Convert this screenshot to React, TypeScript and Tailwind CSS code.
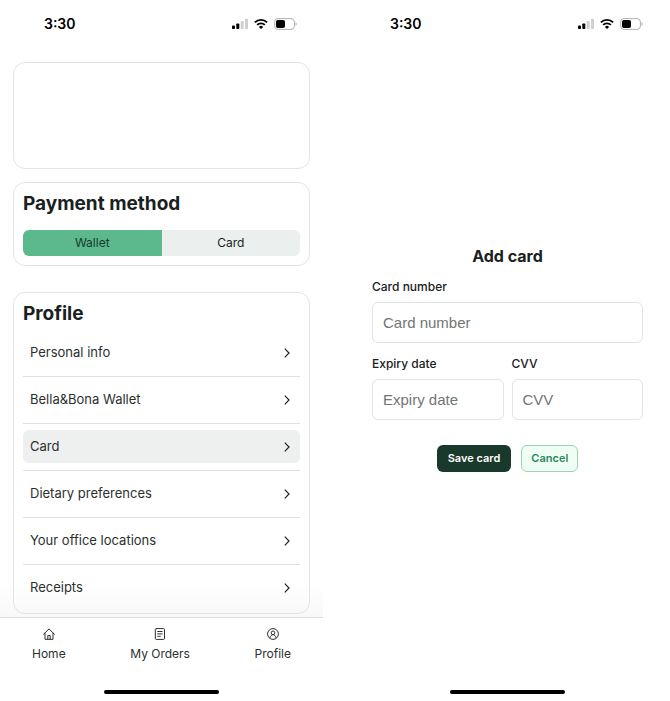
import React from 'react'
import clsx from 'clsx'

const menuItems = [
  'Personal info',
  'Bella&Bona Wallet',
  'Card',
  'Dietary preferences',
  'Your office locations',
  'Receipts',
]

function StatusBar() {
  return (
    <div className="flex h-12 shrink-0 items-center justify-between pl-11 pr-[26px] text-black">
      <span className="text-sm font-semibold">3:30</span>
      <div className="flex items-center gap-[6px]">
        <svg width="16" height="12" viewBox="0 0 16 12" fill="currentColor" aria-hidden="true">
          <rect x="0" y="7.5" width="3" height="3.5" rx="0.8" />
          <rect x="4.3" y="5.5" width="3" height="5.5" rx="0.8" />
          <rect x="8.7" y="3" width="3" height="8" rx="0.8" fill="#cfcfcf" />
          <rect x="13" y="0.7" width="3" height="10.3" rx="0.8" fill="#cfcfcf" />
        </svg>
        <svg width="14" height="12" viewBox="0 0 14 12" fill="none" stroke="currentColor" strokeWidth="1.9" aria-hidden="true">
          <path d="M0.9 4.4a8.7 8.7 0 0 1 12.2 0" />
          <path d="M3.2 6.9a5.4 5.4 0 0 1 7.6 0" />
          <path d="M7 11.1 4.9 8.9a3 3 0 0 1 4.2 0z" fill="currentColor" stroke="none" />
        </svg>
        <svg width="23" height="12" viewBox="0 0 23 12" aria-hidden="true">
          <rect x="0.6" y="0.6" width="19.8" height="10.8" rx="3.4" fill="none" stroke="#b0b0b0" />
          <rect x="2" y="2" width="9" height="8" rx="2" fill="#000" />
          <path d="M21.5 4.2c.8.3 1.2 1 1.2 1.8s-.4 1.5-1.2 1.8z" fill="#b0b0b0" />
        </svg>
      </div>
    </div>
  )
}

function HomeIndicator() {
  return <div className="mx-auto h-1 w-[115px] shrink-0 rounded-full bg-black" />
}

function ChevronIcon() {
  return (
    <svg width="6" height="10" viewBox="0 0 6 10" fill="none" stroke="#1b2421" strokeWidth="1.2" aria-hidden="true">
      <path d="M0.8 0.7 5 5 0.8 9.3" />
    </svg>
  )
}

function HomeIcon() {
  return (
    <svg width="12" height="12" viewBox="0 0 12 12" fill="none" stroke="currentColor" strokeLinejoin="round" strokeLinecap="round" aria-hidden="true">
      <path d="M0.5 6.3 6 0.9l5.5 5.4M2 5.2v6.1h8V5.2M4.8 11.2V7.6h2.4v3.6" />
    </svg>
  )
}

function OrdersIcon() {
  return (
    <svg width="12" height="12" viewBox="0 0 12 12" fill="none" stroke="currentColor" strokeLinecap="round" aria-hidden="true">
      <rect x="1.3" y="0.6" width="9.2" height="10.8" rx="1" />
      <path d="M3.7 3.5h4.5M3.7 5.9h4.5M3.7 8.3h2.6" />
    </svg>
  )
}

function ProfileIcon() {
  return (
    <svg width="12" height="12" viewBox="0 0 12 12" fill="none" stroke="currentColor" aria-hidden="true">
      <circle cx="6" cy="6" r="5.4" />
      <circle cx="6" cy="4.8" r="1.8" />
      <path d="M3 9.9c.3-2 1.5-3.2 3-3.2s2.7 1.2 3 3.2" />
    </svg>
  )
}

function ProfileScreen() {
  return (
    <div className="flex flex-col pb-[7px]">
      <StatusBar />

      <main className="bg-[linear-gradient(to_top,#f8f8f8,#fff_32px)] px-[13px] pb-[3px] pt-[14px]">
        <section className="h-[107px] rounded-xl border border-[#e2e4e3]" />

        {/* Payment method */}
        <section className="mt-[13px] rounded-xl border border-[#e2e4e3] px-[9px] pb-[9px] pt-[9px]">
          <h2 className="text-[19px] font-bold leading-6">Payment method</h2>
          <div className="mt-[14px] grid grid-cols-2 overflow-hidden rounded-md text-xs">
            <button type="button" className="h-[26px] bg-[#5cb88d] text-[#173a2c]">Wallet</button>
            <button type="button" className="h-[26px] bg-[#ebefee]">Card</button>
          </div>
        </section>

        {/* Profile menu */}
        <section className="mt-[26px] rounded-xl border border-[#e2e4e3] px-[9px] pb-[9px] pt-[9px]">
          <h2 className="text-[19px] font-bold leading-6">Profile</h2>
          <ul className="mt-[4px] divide-y divide-[#dfe1e0]">
            {menuItems.map((item) => (
              <li key={item} className="pb-[7px] pt-[6px] last:pb-0">
                <button
                  type="button"
                  className={clsx(
                    'flex h-[33px] w-full items-center justify-between rounded-md pl-[7px] pr-[10px] text-left text-[13px] text-[#2a302e]',
                    item === 'Card' && 'bg-[#eef0ef]'
                  )}
                >
                  {item}
                  <ChevronIcon />
                </button>
              </li>
            ))}
          </ul>
        </section>
      </main>

      {/* Bottom navigation */}
      <nav className="flex justify-between border-t border-[#dcdedd] px-8 pt-[10px] text-xs text-[#2a302e]">
        <a href="#home" className="flex flex-col items-center gap-[6px]"><HomeIcon />Home</a>
        <a href="#orders" className="flex flex-col items-center gap-[6px]"><OrdersIcon />My Orders</a>
        <a href="#profile" className="flex flex-col items-center gap-[6px]"><ProfileIcon />Profile</a>
      </nav>

      <div className="mt-auto">
        <HomeIndicator />
      </div>
    </div>
  )
}

type FieldProps = {
  id: string
  label: string
}

function Field({ id, label }: FieldProps) {
  return (
    <div>
      <label htmlFor={id} className="block text-xs font-medium leading-4">{label}</label>
      <input
        id={id}
        placeholder={label}
        className="mt-[7px] h-[41px] w-full rounded-md border border-[#e2e4e3] bg-white px-[10px] font-['Liberation_Sans',sans-serif] text-[15px] placeholder:text-[#717674]"
      />
    </div>
  )
}

function AddCardScreen() {
  return (
    <div className="flex flex-col pb-[7px]">
      <StatusBar />

      <form className="mb-auto mt-[196px] px-[26px]">
        <h2 className="text-center text-base font-bold leading-6">Add card</h2>
        <div className="mt-[11px] grid gap-[13px]">
          <Field id="card-number" label="Card number" />
          <div className="grid grid-cols-2 gap-2">
            <Field id="expiry-date" label="Expiry date" />
            <Field id="cvv" label="CVV" />
          </div>
        </div>
        <div className="mt-[25px] flex justify-center gap-[10px] text-[11px] font-semibold">
          <button type="button" className="h-[27px] rounded-md bg-[#18392b] px-[11px] text-white">Save card</button>
          <button type="button" className="h-[27px] rounded-md border border-[#97d5b5] bg-[#f0fdf5] px-[9px] text-[#288a5c]">Cancel</button>
        </div>
      </form>

      <HomeIndicator />
    </div>
  )
}

export default function App() {
  return (
    <div className="grid min-h-screen grid-cols-2 gap-[23px] bg-white pr-px font-['Inter',sans-serif] text-[#19211e]">
      <ProfileScreen />
      <AddCardScreen />
    </div>
  )
}
